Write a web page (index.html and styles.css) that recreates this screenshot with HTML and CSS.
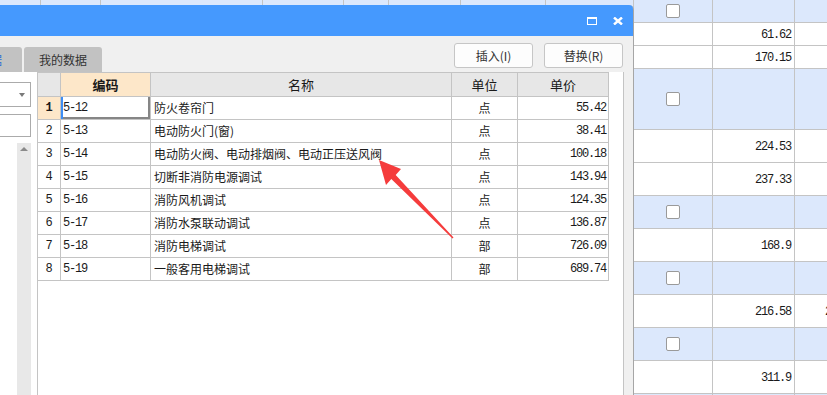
FILE: index.html
```html
<!DOCTYPE html>
<html lang="zh-CN">
<head>
  <meta charset="UTF-8" />
  <title>定额查询</title>
  <link rel="stylesheet" href="styles.css">
</head>
<body>

  <div class="sheet">
    <div class="row blue h23"><div></div><div></div><div></div><div></div><div></div><div></div><div></div><div></div><div class="chk"><span class="box"></span></div><div></div><div></div></div>
    <div class="row h23"><div></div><div></div><div></div><div></div><div></div><div></div><div></div><div></div><div></div><div class="val">61.62</div><div></div></div>
    <div class="row h23"><div></div><div></div><div></div><div></div><div></div><div></div><div></div><div></div><div></div><div class="val">170.15</div><div></div></div>
    <div class="row blue h61"><div></div><div></div><div></div><div></div><div></div><div></div><div></div><div></div><div class="chk"><span class="box"></span></div><div></div><div></div></div>
    <div class="row h33"><div></div><div></div><div></div><div></div><div></div><div></div><div></div><div></div><div></div><div class="val">224.53</div><div></div></div>
    <div class="row h33"><div></div><div></div><div></div><div></div><div></div><div></div><div></div><div></div><div></div><div class="val">237.33</div><div></div></div>
    <div class="row blue h33"><div></div><div></div><div></div><div></div><div></div><div></div><div></div><div></div><div class="chk"><span class="box"></span></div><div></div><div></div></div>
    <div class="row h33"><div></div><div></div><div></div><div></div><div></div><div></div><div></div><div></div><div></div><div class="val">168.9</div><div></div></div>
    <div class="row blue h33"><div></div><div></div><div></div><div></div><div></div><div></div><div></div><div></div><div class="chk"><span class="box"></span></div><div></div><div></div></div>
    <div class="row h33"><div></div><div></div><div></div><div></div><div></div><div></div><div></div><div></div><div></div><div class="val">216.58</div><div class="val">216.58</div></div>
    <div class="row blue h33"><div></div><div></div><div></div><div></div><div></div><div></div><div></div><div></div><div class="chk"><span class="box"></span></div><div></div><div></div></div>
    <div class="row h33"><div></div><div></div><div></div><div></div><div></div><div></div><div></div><div></div><div></div><div class="val">311.9</div><div></div></div>
    <div class="row blue h33"><div></div><div></div><div></div><div></div><div></div><div></div><div></div><div></div><div class="chk"><span class="box"></span></div><div></div><div></div></div>
  </div>

  <div class="dialog">
    <div class="titlebar">
      <span class="win-max"></span>
      <svg class="win-close" width="10" height="8" viewBox="0 0 10 8">
        <path d="M1 0.5 L9 7.5 M9 0.5 L1 7.5" stroke="#fff" stroke-width="2.4" fill="none"/>
      </svg>
    </div>

    <div class="toolbar">
      <div class="tabs">
        <div class="tab tab-cut"><span>标准数据</span></div>
        <div class="tab">我的数据</div>
      </div>
      <div class="actions">
        <button type="button">插入(I)</button>
        <button type="button">替换(R)</button>
      </div>
    </div>

    <div class="content">
      <div class="side">
        <div class="select"><span class="caret"></span></div>
        <div class="search"></div>
        <div class="scroll"><span class="up"></span></div>
      </div>

      <div class="grid">
        <table>
          <colgroup>
            <col class="w-no"><col class="w-code"><col class="w-name"><col class="w-unit"><col class="w-price">
          </colgroup>
          <thead>
            <tr><th></th><th class="cur">编码</th><th>名称</th><th>单位</th><th>单价</th></tr>
          </thead>
          <tbody>
            <tr><td class="no cur">1</td><td class="code focus">5-12</td><td>防火卷帘门</td><td class="unit">点</td><td class="price">55.42</td></tr>
            <tr><td class="no">2</td><td class="code">5-13</td><td>电动防火门(窗)</td><td class="unit">点</td><td class="price">38.41</td></tr>
            <tr><td class="no">3</td><td class="code">5-14</td><td>电动防火阀、电动排烟阀、电动正压送风阀</td><td class="unit">点</td><td class="price">100.18</td></tr>
            <tr><td class="no">4</td><td class="code">5-15</td><td>切断非消防电源调试</td><td class="unit">点</td><td class="price">143.94</td></tr>
            <tr><td class="no">5</td><td class="code">5-16</td><td>消防风机调试</td><td class="unit">点</td><td class="price">124.35</td></tr>
            <tr><td class="no">6</td><td class="code">5-17</td><td>消防水泵联动调试</td><td class="unit">点</td><td class="price">136.87</td></tr>
            <tr><td class="no">7</td><td class="code">5-18</td><td>消防电梯调试</td><td class="unit">部</td><td class="price">726.09</td></tr>
            <tr><td class="no">8</td><td class="code">5-19</td><td>一般客用电梯调试</td><td class="unit">部</td><td class="price">689.74</td></tr>
          </tbody>
        </table>
      </div>

      <div class="gutter"></div>
    </div>
  </div>

  <svg class="pointer" width="827" height="395" viewBox="0 0 827 395">
    <polygon points="379,160 401,169 395.7,174.9 453.5,237.5 452.5,238.5 391.3,179.1 386,185" fill="#f53c3c"/>
  </svg>

</body>
</html>
```

FILE: styles.css
```css
:root {
  --title: #4599fe;
  --body-bg: #f0f0f0;
  --line: #c4c4c4;
  --sheet-blue: #dce8fc;
  --sel: #fde7c9;
  --text: #1a1a1a;
}

* {
  box-sizing: border-box;
  margin: 0;
  padding: 0;
}

html, body {
  width: 827px;
  height: 395px;
  overflow: hidden;
}

body {
  position: relative;
  font-family: "Noto Sans CJK SC", "Noto Sans", sans-serif;
  font-size: 12px;
  color: var(--text);
  background: #fff;
}

/* background spreadsheet */
.sheet {
  width: 827px;
  height: 395px;
  overflow: hidden;
}

.row {
  display: grid;
  grid-template-columns: 41px 60px 162px 81px 45px 72px 85px 88px 79px 82px 70px;
}

.row > div {
  border-right: 1px solid var(--line);
  border-bottom: 1px solid var(--line);
  display: flex;
  align-items: center;
}

.row.blue { background: var(--sheet-blue); }
.row.h23 { height: 23px; }
.row.h33 { height: 33px; }
.row.h61 { height: 61px; }

.row .val {
  justify-content: flex-end;
  padding-right: 3px;
  padding-top: 1px;
  font-family: "Liberation Mono", monospace;
  font-size: 12px;
  letter-spacing: -1.2px;
  white-space: nowrap;
  overflow: hidden;
}

.row .val:last-child {
  justify-content: flex-start;
  padding-left: 30px;
}

.row .chk {
  justify-content: center;
}

.box {
  display: block;
  width: 14px;
  height: 14px;
  background: #fff;
  border: 1px solid #9a9a9a;
  border-radius: 2px;
}

/* dialog window */
.dialog {
  position: absolute;
  left: -1px;
  top: 5px;
  width: 635px;
  height: 390px;
  background: var(--body-bg);
  border: 1px solid #a6a6a6;
  border-top: 0;
  border-bottom: 0;
  border-radius: 0 5px 0 0;
  display: flex;
  flex-direction: column;
}

.titlebar {
  height: 31px;
  background: var(--title);
  border-radius: 0 4px 0 0;
  display: flex;
  align-items: center;
  justify-content: flex-end;
  gap: 16px;
  padding: 0 10px 0 0;
}

.win-max {
  display: block;
  width: 10px;
  height: 8px;
  border: 1px solid #fff;
  border-top-width: 2px;
}

.win-close {
  display: block;
}

.toolbar {
  height: 36px;
  display: flex;
  justify-content: space-between;
}

.tabs {
  display: flex;
  align-items: flex-end;
  gap: 2px;
}

.tab {
  height: 25px;
  padding: 0 15px;
  background: #c2c2c2;
  border-radius: 3px 3px 0 0;
  color: #333;
  line-height: 25px;
}

.tab-cut {
  width: 22px;
  padding: 0;
  overflow: hidden;
  display: flex;
  justify-content: flex-end;
  border-radius: 0 3px 0 0;
}

.tab-cut span {
  padding-right: 20px;
  color: #2a6fd6;
  white-space: nowrap;
}

.actions {
  display: flex;
  gap: 11px;
  padding: 7px 10px 0 0;
}

.actions button {
  width: 79px;
  height: 25px;
  background: #fdfdfd;
  border: 1px solid #c6c6c6;
  border-radius: 3px;
  font-family: inherit;
  font-size: 12px;
  color: #333;
}

.content {
  flex: 1;
  min-height: 0;
  display: flex;
}

/* left filter panel */
.side {
  width: 37px;
  background: #fff;
  display: flex;
  flex-direction: column;
}

.select {
  position: relative;
  margin: 10px 0 0 -5px;
  width: 36px;
  height: 25px;
  border: 1px solid #ababab;
  background: #fff;
}

.caret {
  position: absolute;
  right: 5px;
  top: 10px;
  border-left: 3px solid transparent;
  border-right: 3px solid transparent;
  border-top: 4px solid #7a7a7a;
}

.search {
  margin: 7px 0 0 -5px;
  width: 36px;
  height: 23px;
  border: 1px solid #ababab;
  background: #fff;
}

.scroll {
  margin: 6px 0 0 17px;
  width: 14px;
  flex: 1;
  background: #e8e8e8;
  display: flex;
  justify-content: center;
}

.up {
  margin-top: 4px;
  width: 0;
  height: 0;
  border-left: 4px solid transparent;
  border-right: 4px solid transparent;
  border-bottom: 4px solid #8a8a8a;
}

/* result grid */
.grid {
  width: 587px;
  background: #fff;
  border-left: 1px solid var(--line);
  border-right: 1px solid var(--line);
}

table {
  table-layout: fixed;
  border-collapse: separate;
  border-spacing: 0;
  width: 571px;
}

.w-no { width: 23px; }
.w-code { width: 90px; }
.w-name { width: 301px; }
.w-unit { width: 66px; }
.w-price { width: 91px; }

th, td {
  border-right: 1px solid var(--line);
  border-bottom: 1px solid var(--line);
  white-space: nowrap;
  overflow: hidden;
}

th {
  border-top: 1px solid var(--line);
  background: #e7e7e7;
  line-height: 23px;
  font-size: 13px;
  font-weight: normal;
  text-align: center;
}

th.cur {
  background: var(--sel);
  font-weight: bold;
}

td {
  line-height: 22px;
  padding: 0 0 0 3px;
}

td.no {
  padding: 0;
  text-align: center;
  font-family: "Liberation Mono", monospace;
  font-size: 12px;
}

td.no.cur {
  background: var(--sel);
  font-weight: bold;
}

td.code {
  padding-left: 2px;
  font-family: "Liberation Mono", monospace;
  letter-spacing: -1.2px;
}

td.focus {
  box-shadow: inset 2px 0 0 #3d8ef5, inset -2px -2px 0 #868686;
}

td.unit {
  padding: 0;
  text-align: center;
}

td.price {
  padding: 0 2px 0 0;
  text-align: right;
  font-family: "Liberation Mono", monospace;
  letter-spacing: -1.2px;
}

.gutter {
  flex: 1;
}

/* annotation arrow */
.pointer {
  position: absolute;
  left: 0;
  top: 0;
  pointer-events: none;
}
```
